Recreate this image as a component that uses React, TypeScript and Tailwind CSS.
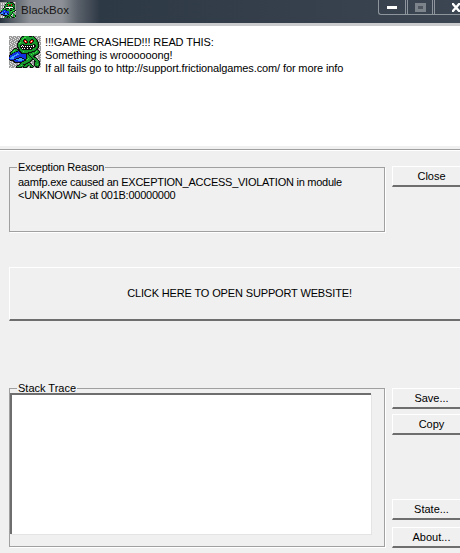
const ui = { fontFamily: '"Liberation Sans", Arial, sans-serif' };

const ICON_ROWS = [
  'gggwgggwgggwgkkGGGGGkkkGkgggwggg',
  'gwgggwgggwggkGGLLGGGGGGGGkgwgggw',
  'ggwgggwgggwkGGLGGGGGGGGGGGkggwgg',
  'wgggwgggwggkGLGkkGGGGGkkGGGkgggw',
  'ggwgggwgggkGGGkRRkGGGkRRkGGDkwgg',
  'gwgggwgggkkGGGkRWRkGkRWRkGGDkggw',
  'gggwgggwgkGLGGGkRRkGkRRkGGGGDkgg',
  'gwgggwggkGLGGGGGkkGGGkkGGGGGDkwg',
  'ggwgggwgkGGGDkkGGGGGGGGGkkGGDkgg',
  'wgggwgggkGGkkWkkkkkkkkkkWkkGGkgw',
  'ggwgggwgkGGkWkWkWkWkWkWkWkkGDkgg',
  'gwgggwggkkGkkkkkkkkkkkkkkkGGDkwg',
  'gggwgkkkgkGGkWkWkkWkkWkkGGGDkggg',
  'gwggkGGGkkkGGkkkkkkkkkkGGGGkkgwg',
  'ggwkGLGGGkkGGGGGGGGGGGGGGDkGGkgg',
  'wgkGLGGkkBkkGGLGGGGGGGDkkkGLGGkw',
  'gkGGGkBBBBBkkGGGGGGkkkkGGGLGGDkg',
  'gkGkBBBBCBBBkkkkkkkkGGGGLGGGDkgw',
  'gkkBBBBCCCBBBBBBBkGkGGLGGDDkkgwg',
  'kBBBBCCCBBBBBBBBBkGGkGGGDkkgwggg',
  'kBBCCCBBBBBBBBBBBkGGGkGGkkgwgggw',
  'BBCCCBBBBBkkkBBBBkGGGGkGGkkgwggg',
  'BCCCCBBkkkCCCkkBBkGLGGGkGGGkgggw',
  'kBBBBkkCCCCCCCCkkGLGGGDkkGGGkwgg',
  'gkkkkBBBBCCCCBBkkGGGGDkgwkGGGkgg',
  'gwggkkBBBBBBBkkGGGGGDkgggkkGGDkg',
  'gggwgkkkkkkkkGGGGGDkkgwggkGGGDkw',
  'gwgggwgggwgkGGGGDkkGGkgggkGGGGkg',
  'ggwgggwgggkGGGkkkGGGGGkwgkGGLGkg',
  'wgggwgggkkGGLGGkGGDkGGGkgkGGGDkw',
  'ggwgggwkGGGGDDkGGDkggkGGkgkkDkgg',
  'gwgggwgkkkkkkgkkkkgwgkkkgwgkkkgw',
];

const ICON_COLORS: Record<string, string> = {
  g: '#9a9a9a',
  w: '#e4e4e4',
  k: '#101010',
  G: '#169a2c',
  D: '#0a6a1c',
  L: '#46e04c',
  R: '#e02010',
  W: '#ffffff',
  B: '#1030e0',
  C: '#3fa0f5',
};

function MonsterIcon({ size }: { size: number }) {
  return (
    <svg width={size} height={size} viewBox="0 0 32 32" shapeRendering="crispEdges" className="shrink-0">
      {ICON_ROWS.map((row, y) =>
        row.split('').map((c, x) => <rect key={`${x}-${y}`} x={x} y={y} width={1} height={1} fill={ICON_COLORS[c]} />),
      )}
    </svg>
  );
}

function SideButton({ label }: { label: string }) {
  return (
    <button className="w-[78px] h-[21px] bg-[#f0f0f0] border-l border-t border-white border-b-2 border-b-[#6e6e6e] text-[11px] leading-none text-black">
      {label}
    </button>
  );
}

export default function App() {
  return (
    <div style={ui} className="w-[460px] h-[553px] overflow-hidden bg-[#f0f0f0] flex flex-col text-[11px] text-black">
      {/* title bar */}
      <div className="h-[23px] shrink-0 flex items-start bg-[linear-gradient(90deg,#27323e_0,#5d646c_14px,#8d9197_30px,#8d9197_62px,#5a616a_78px,#2e3946_100px,#333e4a_250px,#3c4652_100%)]">
        <div className="mt-[2px]">
          <MonsterIcon size={16} />
        </div>
        <div className="ml-[5px] mt-[1px] h-[18px] leading-[18px] text-[11.5px] text-[#161616]">BlackBox</div>
        <div className="ml-auto w-[82px] flex h-[15px] border-l border-b border-[#8e959c] rounded-bl-[3px]">
          <div className="w-[27px] flex items-center justify-center border-r border-[#8e959c]">
            <div className="w-[10px] h-[3px] bg-white" />
          </div>
          <div className="ml-[1px] w-[26px] flex items-center justify-center border-x border-[#8e959c]">
            <div className="w-[11px] h-[9px] border-[3px] border-[#7c838a] bg-[#50575e]" />
          </div>
          <div className="ml-[1px] flex-1 flex items-center justify-end border-l border-[#8e959c]">
            <svg width="8" height="9" viewBox="0 0 8 9">
              <path d="M0 0 L8 9 M8 0 L0 9" stroke="#ffffff" strokeWidth="2.4" />
            </svg>
          </div>
        </div>
      </div>
      <div className="h-[3px] shrink-0 bg-[#c9cbcd]" />

      {/* message panel */}
      <div className="h-[120px] shrink-0 bg-white pl-[9px] pt-[10px] flex items-start gap-[4px]">
        <MonsterIcon size={32} />
        <div className="leading-[13px] whitespace-nowrap tracking-[-0.12px]">
          <div>!!!GAME CRASHED!!! READ THIS:</div>
          <div>Something is wroooooong!</div>
          <div>If all fails go to http://support.frictionalgames.com/ for more info</div>
        </div>
      </div>
      <div className="h-[3px] shrink-0" />
      <div className="h-[1px] shrink-0 bg-[#a0a0a0]" />
      <div className="h-[1px] shrink-0 bg-white" />

      {/* exception row */}
      <div className="h-[116px] shrink-0 pl-[9px] pt-[11px] flex gap-[7px]">
        <fieldset className="w-[376px] h-[70px] shrink-0 border border-[#a0a0a0] pl-[8px] pr-2 shadow-[1px_1px_0_#ffffff]">
          <legend className="-ml-[1px] h-[10px] px-[1px] leading-[10px] tracking-[-0.2px]">Exception Reason</legend>
          <div className="leading-[13px] pt-[4px] whitespace-nowrap tracking-[-0.25px]">
            aamfp.exe caused an EXCEPTION_ACCESS_VIOLATION in module
            <br />
            &lt;UNKNOWN&gt; at 001B:00000000
          </div>
        </fieldset>
        <div className="pt-[4px]">
          <SideButton label="Close" />
        </div>
      </div>

      {/* support link */}
      <button className="ml-[9px] w-[460px] h-[54px] shrink-0 bg-[#f0f0f0] border-l border-t border-white border-b-2 border-b-[#6e6e6e] text-[11px] tracking-[-0.14px]">
        CLICK HERE TO OPEN SUPPORT WEBSITE!
      </button>

      {/* stack trace row */}
      <div className="flex-1 pl-[9px] pt-[62px] flex gap-[7px]">
        <fieldset className="w-[376px] h-[164px] shrink-0 border border-[#a0a0a0] pr-[13px] shadow-[1px_1px_0_#ffffff]">
          <legend className="ml-[7px] h-[10px] px-[1px] leading-[10px]">Stack Trace</legend>
          <div className="h-[141px] bg-white border-l-2 border-t-2 border-[#6e6e6e] shadow-[1px_1px_0_#e4e4e4]" />
        </fieldset>
        <div className="pt-[5px] pb-[5px] flex flex-col">
          <SideButton label="Save..." />
          <div className="mt-[5px]">
            <SideButton label="Copy" />
          </div>
          <div className="mt-auto">
            <SideButton label="State..." />
          </div>
          <div className="mt-[7px]">
            <SideButton label="About..." />
          </div>
        </div>
      </div>
    </div>
  );
}
